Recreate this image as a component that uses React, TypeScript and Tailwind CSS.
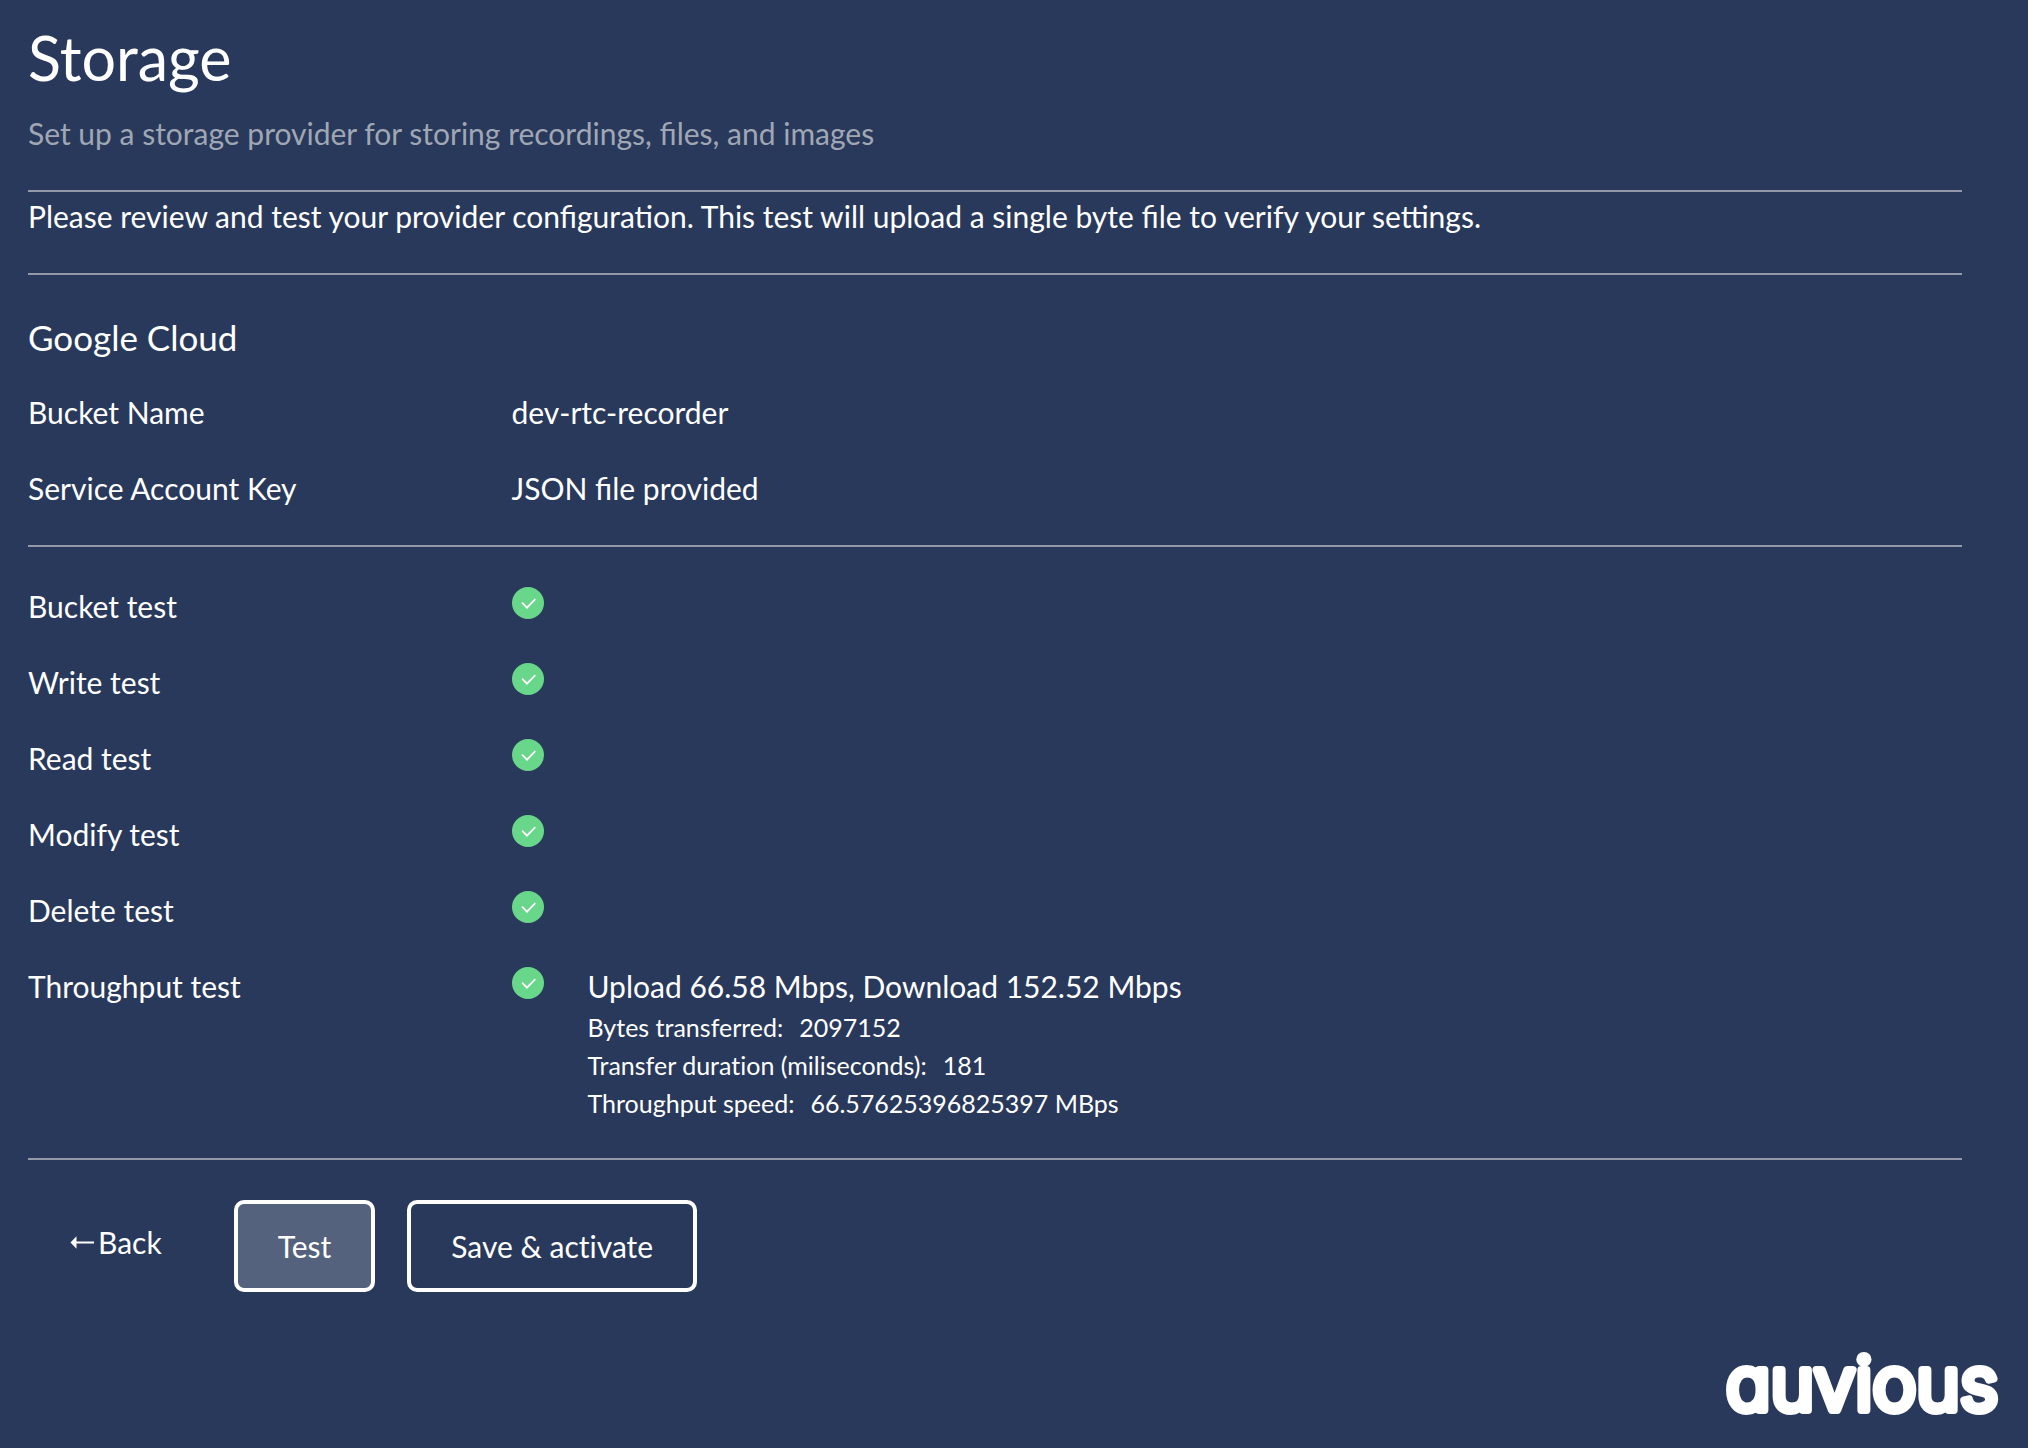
import type { ReactNode } from "react";

const tests = ["Bucket test", "Write test", "Read test", "Modify test", "Delete test"];

const metrics = [
  { label: "Bytes transferred:", value: "2097152" },
  { label: "Transfer duration (miliseconds):", value: "181" },
  { label: "Throughput speed:", value: "66.57625396825397 MBps" },
];

function CheckBadge() {
  return (
    <svg viewBox="0 0 32 32" className="size-8 shrink-0" role="img" aria-label="Passed">
      <circle cx="16" cy="16" r="16" fill="#69d789" />
      <path d="M10 15.700l5 5 8.300-8.500" fill="none" stroke="#fff" strokeWidth="1.700" />
    </svg>
  );
}

function Row({ label, children }: { label: string; children: ReactNode }) {
  return (
    <div className="grid grid-cols-4">
      <dt>{label}</dt>
      <dd className="col-span-3">{children}</dd>
    </div>
  );
}

function Logo() {
  return (
    <svg viewBox="0 0 300 100" className="h-[100px] w-[300px]" role="img" aria-label="auvious">
      <text
        x="150"
        y="78"
        textAnchor="middle"
        fill="#fff"
        stroke="#fff"
        strokeWidth="8"
        strokeLinejoin="round"
        className="font-['Inter',sans-serif] text-[74px] leading-[90px] font-light [font-feature-settings:'cv11']"
      >
        auvious
      </text>
    </svg>
  );
}

export default function App() {
  return (
    <div className="flex min-h-screen flex-col bg-[#29395b] font-['Lato',sans-serif] text-[30px] leading-[38px] text-white">
      <main className="pt-[22px] pr-[66px] pl-7">
        <header className="border-b-2 border-[#9399a8] pb-[38px]">
          <h1 className="text-[61px] leading-[72px]">Storage</h1>
          <p className="mt-5 text-[#a0a7b4]">Set up a storage provider for storing recordings, files, and images</p>
        </header>

        <p className="border-b-2 border-[#9399a8] pt-[5px] pb-[38px]">
          Please review and test your provider configuration. This test will upload a single byte file to verify your
          settings.
        </p>

        <section className="border-b-2 border-[#9399a8] pt-[42px] pb-[38px]">
          <h2 className="text-[35px] leading-10">Google Cloud</h2>
          <dl className="mt-9 grid gap-[38px]">
            <Row label="Bucket Name">dev-rtc-recorder</Row>
            <Row label="Service Account Key">JSON file provided</Row>
          </dl>
        </section>

        <section className="border-b-2 border-[#9399a8] pt-10 pb-9">
          <dl className="grid gap-[38px]">
            {tests.map((name) => (
              <Row key={name} label={name}>
                <CheckBadge />
              </Row>
            ))}
            <Row label="Throughput test">
              <div className="flex items-start gap-11">
                <CheckBadge />
                <div>
                  <p>Upload 66.58 Mbps, Download 152.52 Mbps</p>
                  <ul className="mt-[3px] text-[25px] [font-variant-ligatures:none]">
                    {metrics.map(({ label, value }) => (
                      <li key={label} className="flex gap-4">
                        <span>{label}</span>
                        <span>{value}</span>
                      </li>
                    ))}
                  </ul>
                </div>
              </div>
            </Row>
          </dl>
        </section>

        <div className="mt-10 flex items-center [font-variant-ligatures:none]">
          <button type="button" className="mr-[72px] ml-[42px] flex items-center gap-1 pb-2">
            <svg viewBox="0 0 24 14" className="h-[14px] w-6" aria-hidden="true">
              <path d="M.5 7.500L6.500 1.200V6.500H24v2H6.500v5.300z" fill="#fff" />
            </svg>
            Back
          </button>
          <button type="button" className="mr-8 h-[92px] rounded-[10px] border-4 border-white bg-[#55627d] px-10">
            Test
          </button>
          <button type="button" className="h-[92px] rounded-[10px] border-4 border-white px-10">
            Save &amp; activate
          </button>
        </div>
      </main>

      <footer className="mt-auto flex justify-end pr-4 pb-4">
        <Logo />
      </footer>
    </div>
  );
}
